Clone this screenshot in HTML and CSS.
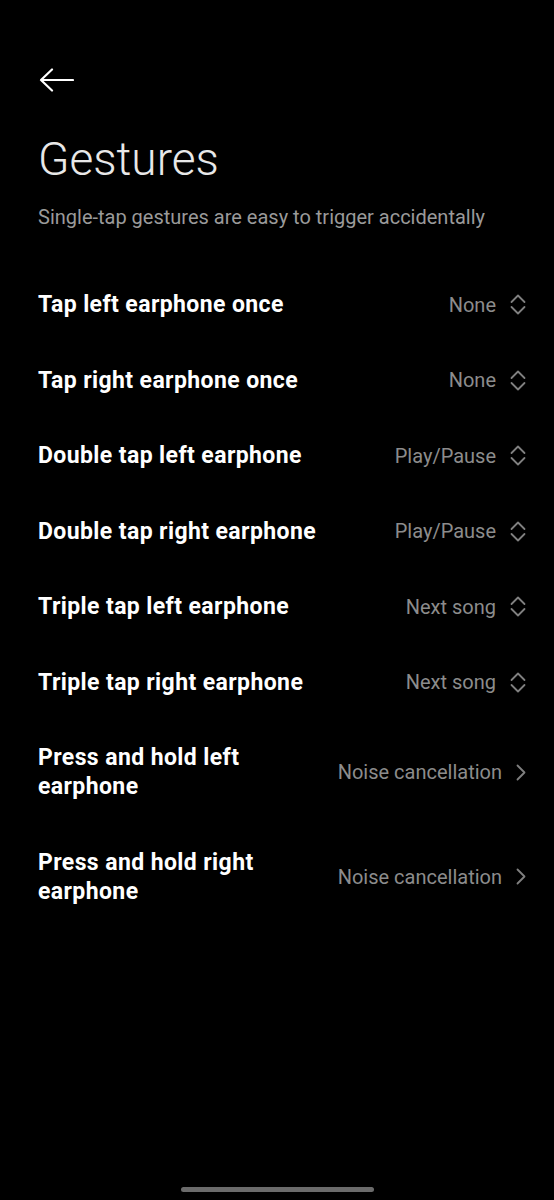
FILE: index.html
```html
<!DOCTYPE html>
<html lang="en">
<head>
  <meta charset="UTF-8" />
  <meta name="viewport" content="width=device-width, initial-scale=1.0" />
  <title>Gestures</title>
  <link rel="stylesheet" href="styles.css">
</head>
<body>
  <div class="page">
    <header class="header">
      <svg class="back" width="36" height="24" viewBox="0 0 36 24" fill="none" stroke="#fff" stroke-width="2.2" stroke-linecap="round" stroke-linejoin="round">
        <path d="M3 12 H35 M14 1.5 L3 12 L14 22.5" />
      </svg>
      <h1>Gestures</h1>
      <p class="subtitle">Single-tap gestures are easy to trigger accidentally</p>
    </header>

    <ul class="list">
      <li class="row">
        <span class="label">Tap left earphone once</span>
        <span class="value">None
          <svg class="icon" width="16" height="21" viewBox="0 0 16 21"><path d="M1.5 8 L8 1.5 L14.5 8 M1.5 13 L8 19.5 L14.5 13" /></svg>
        </span>
      </li>
      <li class="row">
        <span class="label">Tap right earphone once</span>
        <span class="value">None
          <svg class="icon" width="16" height="21" viewBox="0 0 16 21"><path d="M1.5 8 L8 1.5 L14.5 8 M1.5 13 L8 19.5 L14.5 13" /></svg>
        </span>
      </li>
      <li class="row">
        <span class="label">Double tap left earphone</span>
        <span class="value">Play/Pause
          <svg class="icon" width="16" height="21" viewBox="0 0 16 21"><path d="M1.5 8 L8 1.5 L14.5 8 M1.5 13 L8 19.5 L14.5 13" /></svg>
        </span>
      </li>
      <li class="row">
        <span class="label">Double tap right earphone</span>
        <span class="value">Play/Pause
          <svg class="icon" width="16" height="21" viewBox="0 0 16 21"><path d="M1.5 8 L8 1.5 L14.5 8 M1.5 13 L8 19.5 L14.5 13" /></svg>
        </span>
      </li>
      <li class="row">
        <span class="label">Triple tap left earphone</span>
        <span class="value">Next song
          <svg class="icon" width="16" height="21" viewBox="0 0 16 21"><path d="M1.5 8 L8 1.5 L14.5 8 M1.5 13 L8 19.5 L14.5 13" /></svg>
        </span>
      </li>
      <li class="row">
        <span class="label">Triple tap right earphone</span>
        <span class="value">Next song
          <svg class="icon" width="16" height="21" viewBox="0 0 16 21"><path d="M1.5 8 L8 1.5 L14.5 8 M1.5 13 L8 19.5 L14.5 13" /></svg>
        </span>
      </li>
      <li class="row">
        <span class="label">Press and hold left earphone</span>
        <span class="value">Noise cancellation
          <svg class="icon" width="10" height="21" viewBox="0 0 10 21"><path d="M1.5 3.5 L8.5 10.5 L1.5 17.5" /></svg>
        </span>
      </li>
      <li class="row">
        <span class="label">Press and hold right earphone</span>
        <span class="value">Noise cancellation
          <svg class="icon" width="10" height="21" viewBox="0 0 10 21"><path d="M1.5 3.5 L8.5 10.5 L1.5 17.5" /></svg>
        </span>
      </li>
    </ul>
  </div>

  <div class="home-bar"></div>
</body>
</html>
```

FILE: styles.css
```css
body {
  font-family: Roboto, 'Noto Sans', sans-serif;
  background-color: #000;
  color: #fff;
  margin: 0;
  padding: 0;
  height: 1200px;
  display: flex;
  flex-direction: column;
}

.page {
  padding: 0 28px 0 38px;
}

.header {
  padding-top: 68px;
}

.back {
  display: block;
}

h1 {
  font-size: 46px;
  font-weight: 300;
  line-height: 56px;
  color: #e8e8e8;
  margin: 39px 0 0;
}

.subtitle {
  font-size: 20px;
  line-height: 24px;
  color: #9a9a9a;
  margin: 18px 0 0;
}

.list {
  list-style: none;
  margin: 38px 0 0;
  padding: 0;
}

.row {
  display: flex;
  align-items: center;
  justify-content: space-between;
  gap: 24px;
  padding: 23.25px 0;
}

.label {
  flex: 1;
  font-size: 23px;
  font-weight: 700;
  letter-spacing: 0.4px;
  line-height: 29px;
  color: #fff;
}

.value {
  display: flex;
  align-items: center;
  gap: 14px;
  font-size: 20px;
  color: #8c8c8c;
  white-space: nowrap;
}

.icon {
  display: block;
  fill: none;
  stroke: #808080;
  stroke-width: 1.8;
  stroke-linecap: round;
  stroke-linejoin: round;
}

.home-bar {
  margin: auto auto 8px;
  width: 193px;
  height: 5px;
  border-radius: 3px;
  background-color: #6b6b6b;
}
```
